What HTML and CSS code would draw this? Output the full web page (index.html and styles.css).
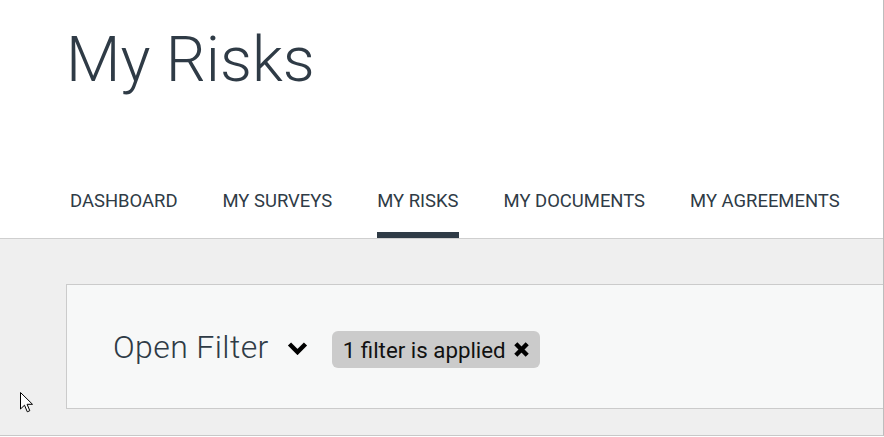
FILE: index.html
```html
<!DOCTYPE html>
<html lang="en">
<head>
    <meta charset="UTF-8">
    <title>My Risks</title>
    <link rel="stylesheet" href="styles.css">
</head>
<body>
    <div class="page">
        <header class="page-header">
            <h1 class="page-title">My Risks</h1>
            <nav>
                <ul class="tabs">
                    <li class="tab">DASHBOARD</li>
                    <li class="tab">MY SURVEYS</li>
                    <li class="tab active">MY RISKS</li>
                    <li class="tab">MY DOCUMENTS</li>
                    <li class="tab">MY AGREEMENTS</li>
                </ul>
            </nav>
        </header>

        <main class="content">
            <div class="filter-box">
                <button type="button" class="filter-toggle">
                    Open Filter
                    <svg class="chevron" width="21" height="14" viewBox="0 0 21 14">
                        <path d="M2.5 3 L10.5 11 L18.5 3" fill="none" stroke="#000" stroke-width="4.5"/>
                    </svg>
                </button>
                <span class="filter-badge">
                    1 filter is applied
                    <svg class="clear" width="17" height="17" viewBox="0 0 17 17">
                        <path d="M2.8 2.8 L14.2 14.2 M14.2 2.8 L2.8 14.2" stroke="#000" stroke-width="4.4"/>
                    </svg>
                </span>
            </div>
        </main>

        <svg class="cursor" width="14" height="24" viewBox="0 0 14 24">
            <path d="M0.5 0.5 L0.5 17 L4.5 13.2 L7.3 19.8 L9.8 18.7 L7.1 12.3 L12.5 12.3 Z" fill="#fff" stroke="#000" stroke-width="1"/>
        </svg>
    </div>
</body>
</html>
```

FILE: styles.css
```css
body {
    margin: 0;
    background-color: #fff;
    font-family: Roboto, "Liberation Sans", sans-serif;
    color: #2f3b46;
}

.page {
    position: relative;
    height: 435px;
    border-right: 1px solid #bdbdbd;
    border-bottom: 1px solid #c8c8c8;
    background-color: #efefef;
    overflow: hidden;
}

.page-header {
    height: 238px;
    background-color: #fff;
    border-bottom: 1px solid #cfcfcf;
    display: flex;
    flex-direction: column;
    justify-content: space-between;
}

.page-title {
    margin: 0;
    padding: 18px 0 0 66px;
    font-size: 63px;
    font-weight: 300;
    line-height: 84px;
    color: #2f3b46;
}

.tabs {
    list-style: none;
    margin: 0;
    padding: 0 0 0 70px;
    display: flex;
    gap: 45px;
}

.tab {
    font-size: 18.45px;
    line-height: 22px;
    padding-bottom: 20px;
    color: #2f3b46;
    border-bottom: 6px solid transparent;
}

.tab.active {
    border-bottom-color: #2f3b46;
}

.content {
    padding: 45px 0 0 66px;
}

.filter-box {
    height: 123px;
    border: 1px solid #cbcbcb;
    border-right: none;
    background-color: #f7f8f8;
    display: flex;
    align-items: center;
    padding-left: 46px;
    gap: 24px;
}

.filter-toggle {
    border: none;
    background: none;
    padding: 0;
    font-family: inherit;
    font-size: 32px;
    font-weight: 300;
    letter-spacing: 0.4px;
    color: #2f3b46;
    display: flex;
    align-items: center;
    gap: 18px;
    cursor: pointer;
}

.chevron {
    margin-top: 2px;
}

.filter-badge {
    display: inline-flex;
    align-items: center;
    gap: 7px;
    height: 37px;
    padding: 0 10px 0 11px;
    margin-top: 6px;
    border-radius: 6px;
    background-color: #cbcbcb;
    font-size: 22.3px;
    color: #111;
}

.cursor {
    position: absolute;
    left: 20px;
    top: 392px;
}
```
